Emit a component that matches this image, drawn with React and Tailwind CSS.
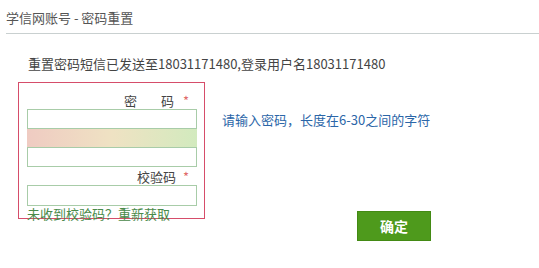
export default function App() {
  const font = { fontFamily: '"Noto Sans CJK SC", "Noto Sans", sans-serif' }

  return (
    <div className="w-[539px] h-[268px] bg-white overflow-hidden text-[13px]" style={font}>
      <div className="ml-[6px] pt-[10px] pb-[7px] border-b border-[#c9d0d0] text-[#555] leading-[16px]">
        学信网账号 - 密码重置
      </div>

      <div className="mt-[22px] pl-[28px] leading-[15px] text-[#444]">
        重置密码短信已发送至18031171480,登录用户名18031171480
      </div>

      <div className="mt-[11px] flex">
        <div className="ml-[18px] w-[187px] h-[137px] border border-[#d64d6a] pl-[8px]">
          <div className="pt-[10px] flex justify-end pr-[15px] leading-[16px] text-[#444]">
            <span>密</span>
            <span className="ml-[24px]">码</span>
            <span className="ml-[9px] text-[#e06a6a]">*</span>
          </div>
          <input type="password" className="block w-[170px] h-[20px] border border-[#a8cca8] outline-none" />
          <div className="w-[170px] h-[18px] bg-gradient-to-r from-[#efcbc2] via-[#efe2c3] to-[#d2eabe]" />
          <input type="password" className="block w-[170px] h-[20px] border border-[#a8cca8] outline-none" />
          <div className="mt-[2px] flex justify-end pr-[15px] leading-[16px] text-[#444]">
            <span>校验码</span>
            <span className="ml-[7px] text-[#e06a6a]">*</span>
          </div>
          <input type="text" className="block w-[170px] h-[21px] border border-[#a8cca8] outline-none" />
          <a className="block leading-[16px] text-[#4a8a4a] whitespace-nowrap cursor-pointer">未收到校验码？重新获取</a>
        </div>

        <div className="pl-[17px] pt-[30px]">
          <div className="leading-[16px] text-[#2b66a8] whitespace-nowrap">请输入密码，长度在6-30之间的字符</div>
          <button className="mt-[83px] ml-[135px] w-[74px] h-[30px] bg-[#4e9a1c] border border-[#438a14] text-white font-bold text-[14px]">
            确定
          </button>
        </div>
      </div>
    </div>
  )
}
